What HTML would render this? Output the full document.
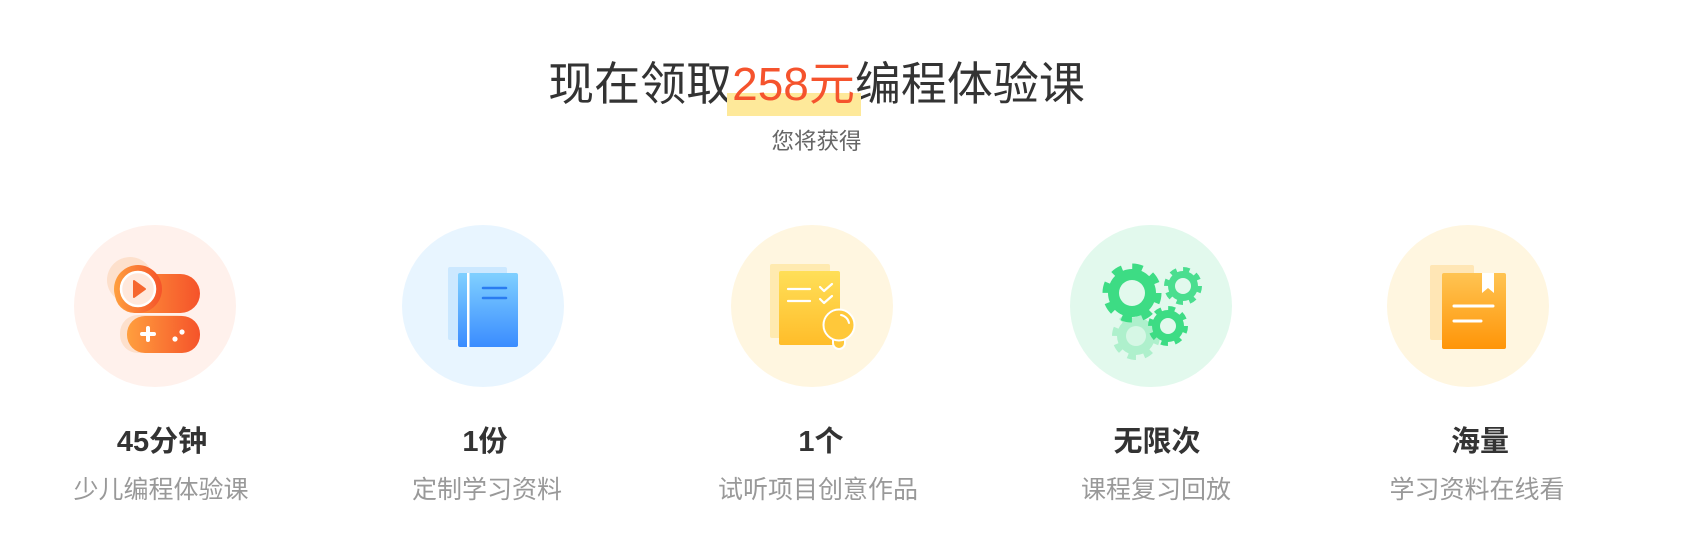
<!DOCTYPE html>
<html><head><meta charset="utf-8"><style>
html,body{margin:0;padding:0;background:#fff;width:1683px;height:559px;overflow:hidden;position:relative;font-family:"Liberation Sans","Noto Sans CJK SC",sans-serif}
.t{position:absolute;left:-25px;width:1683px;text-align:center;white-space:nowrap}
.h{top:55px;font-size:46px;color:#333;line-height:58px;isolation:isolate}
.h .n{color:#f5532d;position:relative;display:inline-block;z-index:0}
.h .n:before{content:"";position:absolute;left:-5px;right:-6px;top:38px;height:23px;background:#fee99a;z-index:-1}
.s{top:128px;font-size:22.5px;color:#666;line-height:28px}
.l{position:absolute;width:300px;margin-left:-150px;text-align:center;white-space:nowrap}
.a{top:425px;font-size:29px;font-weight:bold;color:#333;line-height:34px}
.b{top:474px;font-size:25px;color:#999;line-height:32px}
svg{position:absolute;left:0;top:0}
</style></head><body>
<svg width="1683" height="559" viewBox="0 0 1683 559">
<defs>
<linearGradient id="og" x1="0" x2="1"><stop offset="0" stop-color="#ff9f3e"/><stop offset="1" stop-color="#f5532a"/></linearGradient>
<linearGradient id="bg" x1="0" y1="0" x2="0" y2="1"><stop offset="0" stop-color="#80d0ff"/><stop offset="1" stop-color="#3a8cff"/></linearGradient>
<linearGradient id="yg" x1="0" y1="0" x2="0" y2="1"><stop offset="0" stop-color="#ffdf58"/><stop offset="1" stop-color="#ffbd2a"/></linearGradient>
<linearGradient id="rg" x1="0" y1="0" x2="0" y2="1"><stop offset="0" stop-color="#ffc452"/><stop offset="1" stop-color="#ff9508"/></linearGradient>
</defs>
<circle cx="155" cy="306" r="81" fill="#fff1ec"/>
<circle cx="483" cy="306" r="81" fill="#e8f5ff"/>
<circle cx="812" cy="306" r="81" fill="#fff6e0"/>
<circle cx="1151" cy="306" r="81" fill="#e2f9ed"/>
<circle cx="1468" cy="306" r="81" fill="#fff6e0"/>
<!-- icon1 -->
<circle cx="130" cy="280" r="23" fill="#fde0cc"/>
<rect x="120" y="315" width="75" height="38" rx="18" fill="#fde0cc"/>
<rect x="115" y="274" width="85" height="39" rx="19.5" fill="url(#og)"/>
<rect x="127" y="316" width="73" height="37" rx="18" fill="url(#og)"/>
<circle cx="138" cy="289" r="24" fill="url(#og)"/>
<circle cx="138" cy="289" r="17" fill="#ffe8dc" stroke="#fff" stroke-width="2.5"/>
<path d="M134 281 L145 289 L134 297 Z" fill="#f6672f" stroke="#f6672f" stroke-width="2" stroke-linejoin="round"/>
<path d="M148 328 V340 M142 334 H154" stroke="#fff" stroke-width="4" stroke-linecap="round"/>
<circle cx="175" cy="339" r="2.6" fill="#fff"/><circle cx="182" cy="332" r="2.6" fill="#fff"/>
<!-- icon2 -->
<rect x="448" y="267" width="59" height="73" rx="2" fill="#cce8ff"/>
<rect x="458" y="273" width="60" height="74" rx="2" fill="url(#bg)"/>
<rect x="467" y="273" width="2.5" height="74" fill="#fff"/>
<path d="M483 288 H506 M483 298 H506" stroke="#2a7cf0" stroke-width="2.5" stroke-linecap="round"/>
<!-- icon3 -->
<rect x="770" y="264" width="60" height="74" rx="2" fill="#ffeab0"/>
<rect x="779" y="271" width="61" height="74" rx="2" fill="url(#yg)"/>
<path d="M788 289 H810 M788 301 H810" stroke="#fff" stroke-width="2.2" stroke-linecap="round"/>
<path d="M820 287 L824 291 L832 284 M820 299 L824 303 L832 296" stroke="#fff" stroke-width="2.2" fill="none" stroke-linecap="round" stroke-linejoin="round"/>
<path d="M833 339 H845 V343 A6 6 0 0 1 833 343 Z" fill="#ffc83a" stroke="#fff" stroke-width="2"/>
<circle cx="839" cy="325" r="15.5" fill="#ffc83a" stroke="#fff" stroke-width="2"/>
<path d="M841 315 A10 10 0 0 1 849 323" stroke="#fff" stroke-width="2" fill="none" stroke-linecap="round"/>
<!-- icon4 gears -->
<g fill="#aef0cc" stroke="#aef0cc"><circle cx="1136" cy="336" r="19" stroke="none"/><circle cx="1136" cy="336" r="20" fill="none" stroke-width="8" stroke-dasharray="7.85 7.85"/></g>
<circle cx="1136" cy="336" r="10" fill="#d6f7e5"/>
<g fill="#3ddc84" stroke="#3ddc84"><circle cx="1132" cy="293" r="24" stroke="none"/><circle cx="1132" cy="293" r="25" fill="none" stroke-width="9" stroke-dasharray="9.82 9.82"/></g>
<circle cx="1132" cy="293" r="13" fill="#e2f9ed"/>
<g fill="#4ade8f" stroke="#4ade8f"><circle cx="1183" cy="286" r="15" stroke="none"/><circle cx="1183" cy="286" r="16" fill="none" stroke-width="6" stroke-dasharray="6.28 6.28"/></g>
<circle cx="1183" cy="286" r="8" fill="#e2f9ed"/>
<g fill="#3ddc84" stroke="#3ddc84"><circle cx="1168" cy="326" r="16" stroke="none"/><circle cx="1168" cy="326" r="17" fill="none" stroke-width="6" stroke-dasharray="6.68 6.68"/></g>
<circle cx="1168" cy="326" r="8" fill="#e2f9ed"/>
<!-- icon5 -->
<rect x="1430" y="265" width="44" height="75" rx="2" fill="#ffe6b5"/>
<rect x="1442" y="273" width="64" height="76" rx="2" fill="url(#rg)"/>
<path d="M1482 273 H1494 V293 L1488 288 L1482 293 Z" fill="#fff"/>
<path d="M1454 306 H1493 M1454 321 H1481" stroke="#fff" stroke-width="3" stroke-linecap="round"/>
</svg>
<div class="t h">现在领取<span class="n">258元</span>编程体验课</div>
<div class="t s">您将获得</div>
<div class="l a" style="left:162px">45分钟</div><div class="l b" style="left:161px">少儿编程体验课</div>
<div class="l a" style="left:485px">1份</div><div class="l b" style="left:487px">定制学习资料</div>
<div class="l a" style="left:821px">1个</div><div class="l b" style="left:818px">试听项目创意作品</div>
<div class="l a" style="left:1157px">无限次</div><div class="l b" style="left:1156px">课程复习回放</div>
<div class="l a" style="left:1480px">海量</div><div class="l b" style="left:1477px">学习资料在线看</div>
</body></html>
